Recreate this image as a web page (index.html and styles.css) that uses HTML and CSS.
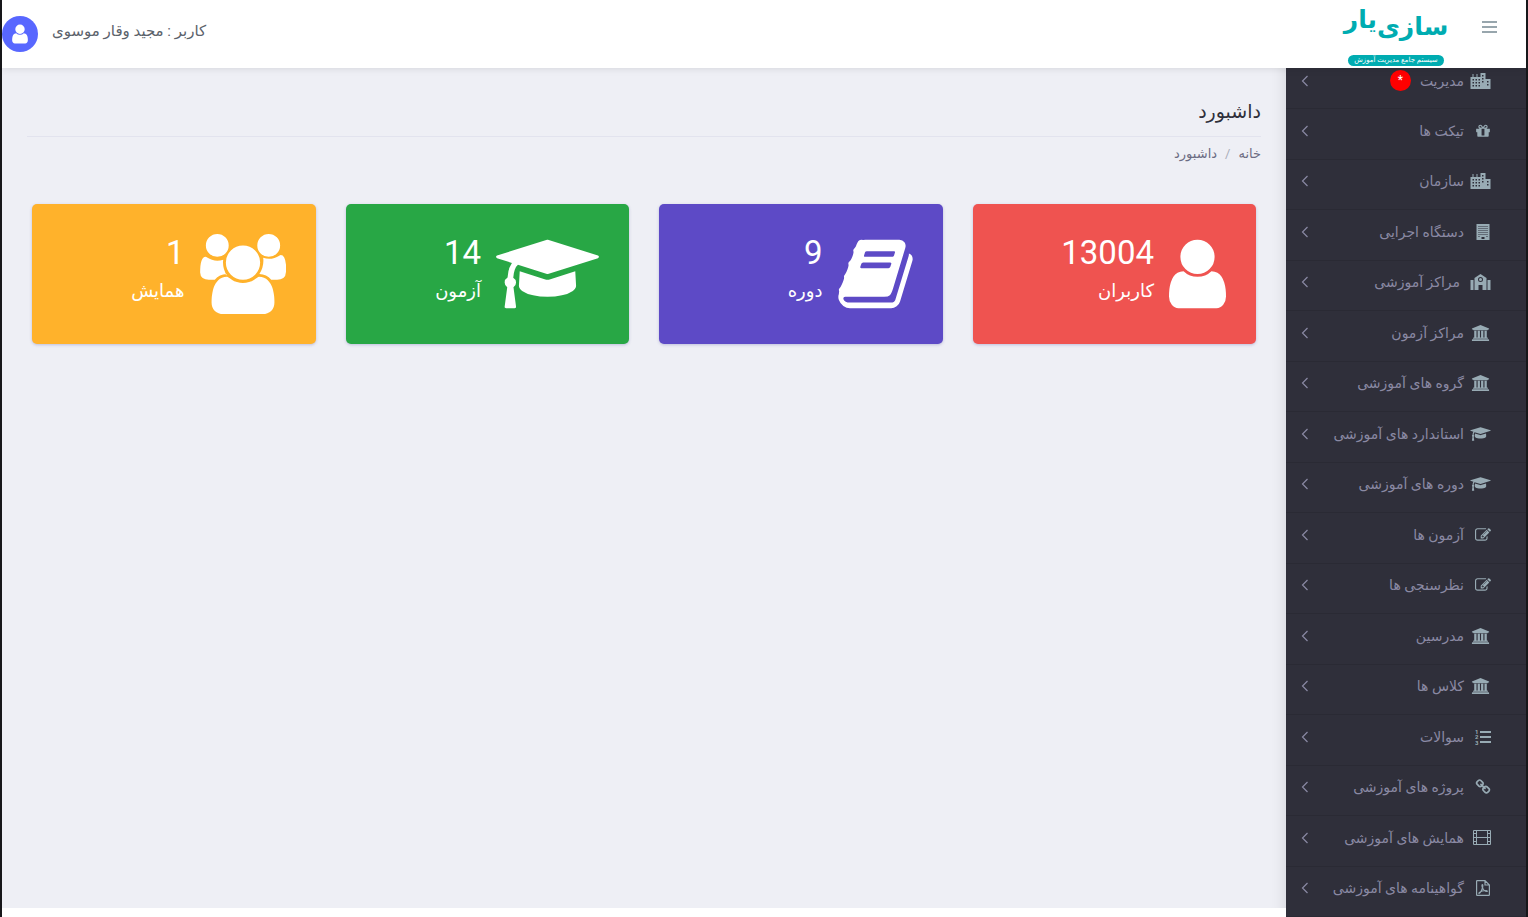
FILE: index.html
```
<!DOCTYPE html>
<html lang="fa" dir="rtl">
<head>
    <meta charset="UTF-8">
    <meta name="viewport" content="width=device-width, initial-scale=1.0">
    <title>داشبورد</title>
    <link rel="stylesheet" href="styles.css">
</head>
<body>
    <!-- Icons -->
    <svg class="sprite" aria-hidden="true">
        <symbol id="i-user" viewBox="256 0 1280 1792"><path d="M1536 1399q0 109-62.5 187t-150.5 78h-854q-88 0-150.5-78t-62.5-187q0-85 8.5-160.5t31.5-152 58.5-131 94-89 134.5-34.5q131 128 313 128t313-128q76 0 134.5 34.5t94 89 58.5 131 31.5 152 8.5 160.5zm-256-887q0 159-112.5 271.5t-271.5 112.5-271.5-112.5-112.5-271.5 112.5-271.5 271.5-112.5 271.5 112.5 112.5 271.5z"/></symbol>
        <symbol id="i-users" viewBox="0 0 1920 1792"><path d="M593 896q-162 5-265 128h-134q-82 0-138-40.5t-56-118.5q0-353 124-353 6 0 43.5 21t97.5 42.5 119 21.5q67 0 133-23-5 37-5 66 0 159 90 296zm1071 637q0 120-73 189.5t-194 69.5h-874q-121 0-194-69.5t-73-189.5q0-53 3.5-103.5t14-109 26.5-108.5 43-97.5 62-81 85.5-53.5 111.5-20q10 0 43 21.5t73 48 107 48 135 21.5 135-21.5 107-48 73-48 43-21.5q61 0 111.5 20t85.5 53.5 62 81 43 97.5 26.5 108.5 14 109 3.5 103.5zm-1024-1277q0 106-75 181t-181 75-181-75-75-181 75-181 181-75 181 75 75 181zm704 384q0 159-112.5 271.5t-271.5 112.5-271.5-112.5-112.5-271.5 112.5-271.5 271.5-112.5 271.5 112.5 112.5 271.5zm576 225q0 78-56 118.5t-138 40.5h-134q-103-123-265-128 90-137 90-296 0-29-5-66 66 23 133 23 59 0 119-21.5t97.5-42.5 43.5-21q124 0 124 353zm-128-609q0 106-75 181t-181 75-181-75-75-181 75-181 181-75 181 75 75 181z"/></symbol>
        <symbol id="i-cap" viewBox="0 0 2304 1792"><path d="M1774 836l18 316q4 69-82 128t-235 93.5-323 34.5-323-34.5-235-93.5-82-128l18-316 574 181q22 7 48 7t48-7zm530-324q0 23-22 31l-1120 352q-4 1-10 1t-10-1l-652-206q-43 34-71 111.5t-34 178.5q63 36 63 109 0 69-58 107l58 433q2 14-8 25-9 11-24 11h-192q-15 0-24-11-10-11-8-25l58-433q-58-38-58-107 0-73 65-111 11-207 98-330l-333-104q-22-8-22-31t22-31l1120-352q4-1 10-1t10 1l1120 352q22 8 22 31z"/></symbol>
        <symbol id="i-book" viewBox="0 0 1664 1792"><path d="M1639 478q40 57 18 129l-275 906q-19 64-76.5 107.5t-122.5 43.5h-923q-77 0-148.5-53.5t-99.5-131.5q-24-67-2-127 0-4 3-27t4-37q1-8-3-21.5t-3-19.5q2-11 8-21t16.5-23.5 16.5-23.5q23-38 45-91.5t30-91.5q3-10 .5-30t-.5-28q3-11 17-28t17-23q21-36 42-92t25-90q1-9-2.5-32t.5-28q4-13 22-30.5t22-22.5q19-26 42.5-84.5t27.5-96.5q1-8-3-25.5t-2-26.5q2-8 9-18t18-23 17-21q8-12 16.5-30.5t15-35 16-36 19.5-32 26.5-23.5 36-11.5 47.5 5.5l-1 3q38-9 51-9h761q74 0 114 56t18 130l-274 906q-36 119-71.5 153.5t-128.5 34.5h-869q-27 0-38 15-11 16-1 43 24 70 144 70h923q29 0 56-15.5t35-41.5l300-987q7-22 5-57 38 15 59 43zm-1064 2q-4 13 2 22.5t20 9.5h608q13 0 25.5-9.5t16.5-22.5l21-64q4-13-2-22.5t-20-9.5h-608q-13 0-25.5 9.5t-16.5 22.5zm-83 256q-4 13 2 22.5t20 9.5h608q13 0 25.5-9.5t16.5-22.5l21-64q4-13-2-22.5t-20-9.5h-608q-13 0-25.5 9.5t-16.5 22.5z"/></symbol>
        <symbol id="i-bank" viewBox="0 0 1920 1792"><path d="M960 0l960 384v128h-128q0 26-20.5 45t-48.5 19h-1526q-28 0-48.5-19t-20.5-45h-128v-128zm-704 640h256v768h128v-768h256v768h128v-768h256v768h128v-768h256v768h59q28 0 48.5 19t20.5 45v64h-1664v-64q0-26 20.5-45t48.5-19h59v-768zm1595 960q28 0 48.5 19t20.5 45v128h-1920v-128q0-26 20.5-45t48.5-19h1782z"/></symbol>
        <symbol id="i-gift" viewBox="128 0 1536 1792"><path d="M1056 1356v-716h-320v716q0 25 18 38.5t46 13.5h192q28 0 46-13.5t18-38.5zm-456-844h195l-126-161q-26-31-69-31-40 0-68 28t-28 68 28 68 68 28zm688-96q0-40-28-68t-68-28q-43 0-69 31l-125 161h194q40 0 68-28t28-68zm376 256v320q0 14-9 23t-23 9h-96v416q0 40-28 68t-68 28h-1088q-40 0-68-28t-28-68v-416h-96q-14 0-23-9t-9-23v-320q0-14 9-23t23-9h440q-93 0-158.5-65.5t-65.5-158.5 65.5-158.5 158.5-65.5q107 0 168 77l128 165 128-165q61-77 168-77 93 0 158.5 65.5t65.5 158.5-65.5 158.5-158.5 65.5h440q14 0 23 9t9 23z"/></symbol>
        <symbol id="i-edit" viewBox="0 128 1792 1536"><path d="M888 1184l116-116-152-152-116 116v56h96v96h56zm440-720q-16-16-33 1l-350 350q-17 17-1 33t33-1l350-350q17-17 1-33zm80 594v190q0 119-84.5 203.5t-203.5 84.5h-832q-119 0-203.5-84.5t-84.5-203.5v-832q0-119 84.5-203.5t203.5-84.5h832q63 0 117 25 15 7 18 23 3 17-9 29l-49 49q-14 14-32 8-23-6-45-6h-832q-66 0-113 47t-47 113v832q0 66 47 113t113 47h832q66 0 113-47t47-113v-126q0-13 9-22l64-64q15-15 35-7t20 29zm-96-738l288 288-672 672h-288v-288zm444 132l-92 92-288-288 92-92q28-28 68-28t68 28l152 152q28 28 28 68t-28 68z"/></symbol>
        <symbol id="i-link" viewBox="64 0 1664 1792"><path d="M1520 1216q0-40-28-68l-208-208q-28-28-68-28-42 0-72 32 3 3 19 18.5t21.5 21.5 15 19 13 25.5 3.5 27.5q0 40-28 68t-68 28q-15 0-27.5-3.5t-25.5-13-19-15-21.5-21.5-18.5-19q-33 31-33 73 0 40 28 68l206 207q27 27 68 27 40 0 68-26l147-146q28-28 28-67zm-703-705q0-40-28-68l-206-207q-28-28-68-28-39 0-68 27l-147 146q-28 28-28 67 0 40 28 68l208 208q27 27 68 27 42 0 72-31-3-3-19-18.5t-21.5-21.5-15-19-13-25.5-3.5-27.5q0-40 28-68t68-28q15 0 27.5 3.5t25.5 13 19 15 21.5 21.5 18.5 19q33-31 33-73zm895 705q0 120-85 203l-147 146q-83 83-203 83-121 0-204-85l-206-207q-83-83-83-203 0-123 88-209l-88-88q-86 88-208 88-120 0-204-84l-208-208q-84-84-84-204t85-203l147-146q83-83 203-83 121 0 204 85l206 207q83 83 83 203 0 123-88 209l88 88q86-88 208-88 120 0 204 84l208 208q84 84 84 204z"/></symbol>
        <symbol id="i-city" viewBox="0 0 20 16"><path fill-rule="evenodd" d="M0 16V4h2V1h1v3h3V1h1v3h3V0h5v5h0v1h5v10zM2 6v1.500h1.500V6zM5 6v1.500h1.500V6zM8 6v1.500h1.500V6zM2 9v1.500h1.500V9zM5 9v1.500h1.500V9zM8 9v1.500h1.500V9zM2 12v1.500h1.500V12zM5 12v1.500h1.500V12zM8 12v1.500h1.500V12zM11.500 2v1.500H13V2zM11.500 5v1.500H13V5zM11.500 8v1.500H13V8zM16.500 8v1.500H18V8zM16.500 11v1.500H18V11z"/></symbol>
        <symbol id="i-building" viewBox="0 0 13 16"><path fill-rule="evenodd" d="M0 0h13v16H0zM2 2v1h1V2zM4 2v1h1V2zM6 2v1h1V2zM8 2v1h1V2zM10 2v1h1V2zM2 4v1h1V4zM4 4v1h1V4zM6 4v1h1V4zM8 4v1h1V4zM10 4v1h1V4zM2 6v1h1V6zM4 6v1h1V6zM6 6v1h1V6zM8 6v1h1V6zM10 6v1h1V6zM2 8v1h1V8zM4 8v1h1V8zM6 8v1h1V8zM8 8v1h1V8zM10 8v1h1V8zM2 10v1h1v-1zM4 10v1h1v-1zM6 10v1h1v-1zM8 10v1h1v-1zM10 10v1h1v-1zM2 12v1h1v-1zM10 12v1h1v-1zM5 13v2h3v-2z"/></symbol>
        <symbol id="i-school" viewBox="0 0 20 16"><path fill-rule="evenodd" d="M0 6h3v10H0zM17 6h3v10h-3zM4 16V4l6-4 6 4v12h-4v-5H8v5zM10 3a2.500 2.500 0 1 0 0 5 2.500 2.500 0 0 0 0-5zm0 1a1.500 1.500 0 1 1 0 3 1.500 1.500 0 0 1 0-3z"/></symbol>
        <symbol id="i-list" viewBox="0 0 16 16"><path d="M5 2h11v2H5zM5 7h11v2H5zM5 12h11v2H5z"/><text x="0" y="5">1</text><text x="0" y="10">2</text><text x="0" y="16">3</text></symbol>
        <symbol id="i-film" viewBox="0 0 18 16"><path fill-rule="evenodd" d="M1 0h16a1 1 0 0 1 1 1v13a1 1 0 0 1-1 1H1a1 1 0 0 1-1-1V1a1 1 0 0 1 1-1zM1 1v2h2V1zM1 4v3h2V4zM1 8v3h2V8zM1 12v2h2v-2zM4 1v6h10V1zM4 8v6h10V8zM15 1v2h2V1zM15 4v3h2V4zM15 8v3h2V8zM15 12v2h2v-2z"/></symbol>
        <symbol id="i-pdf" viewBox="0 0 14 16"><path class="line" d="M9 .600H1.200a.6.6 0 0 0-.6.6v13.600c0 .3.300.6.6.6h11.600c.3 0 .6-.3.600-.6V5zM9 .600V5h4.400M3 13.500c1.500-.5 4.200-5 3.800-8.500-.6-1-1.200.3-.5 2.200.7 2 2.800 4.300 4.500 4.300.9-.1.500-1-.8-1-2 0-5.500 1-6.500 1.900-.6.600-.8 1-.5 1.100z"/></symbol>
        <symbol id="i-arrow" viewBox="0 0 8 12"><path class="line" d="M6.500 1L1.500 6l5 5"/></symbol>
    </svg>

    <!-- Header -->
    <header class="topbar">
        <div class="brand">
            <button class="menu-btn" type="button" aria-label="منو"><span></span><span></span><span></span></button>
            <a class="logo" href="#">
                <span class="logo-name"><span class="low">سازی</span><span>یار</span></span>
                <span class="logo-sub">سیستم جامع مدیریت آموزش</span>
            </a>
        </div>
        <div class="account">
            <span class="account-name">کاربر : مجید وقار موسوی</span>
            <a class="avatar" href="#" aria-label="حساب کاربری"><svg><use href="#i-user"/></svg></a>
        </div>
    </header>

    <div class="wrapper">
        <!-- Sidebar -->
        <nav class="sidebar">
            <ul>
                <li><a href="#"><svg class="icon wide"><use href="#i-city"/></svg>مدیریت <span class="badge">*</span><svg class="arrow"><use href="#i-arrow"/></svg></a></li>
                <li><a href="#"><svg class="icon"><use href="#i-gift"/></svg>تیکت ها<svg class="arrow"><use href="#i-arrow"/></svg></a></li>
                <li><a href="#"><svg class="icon wide"><use href="#i-city"/></svg>سازمان<svg class="arrow"><use href="#i-arrow"/></svg></a></li>
                <li><a href="#"><svg class="icon"><use href="#i-building"/></svg>دستگاه اجرایی<svg class="arrow"><use href="#i-arrow"/></svg></a></li>
                <li><a href="#"><svg class="icon wide spaced"><use href="#i-school"/></svg>مراکز آموزشی<svg class="arrow"><use href="#i-arrow"/></svg></a></li>
                <li><a href="#"><svg class="icon wide"><use href="#i-bank"/></svg>مراکز آزمون<svg class="arrow"><use href="#i-arrow"/></svg></a></li>
                <li><a href="#"><svg class="icon wide"><use href="#i-bank"/></svg>گروه های آموزشی<svg class="arrow"><use href="#i-arrow"/></svg></a></li>
                <li><a href="#"><svg class="icon wide"><use href="#i-cap"/></svg>استاندارد های آموزشی<svg class="arrow"><use href="#i-arrow"/></svg></a></li>
                <li><a href="#"><svg class="icon wide"><use href="#i-cap"/></svg>دوره های آموزشی<svg class="arrow"><use href="#i-arrow"/></svg></a></li>
                <li><a href="#"><svg class="icon"><use href="#i-edit"/></svg>آزمون ها<svg class="arrow"><use href="#i-arrow"/></svg></a></li>
                <li><a href="#"><svg class="icon"><use href="#i-edit"/></svg>نظرسنجی ها<svg class="arrow"><use href="#i-arrow"/></svg></a></li>
                <li><a href="#"><svg class="icon wide"><use href="#i-bank"/></svg>مدرسین<svg class="arrow"><use href="#i-arrow"/></svg></a></li>
                <li><a href="#"><svg class="icon wide"><use href="#i-bank"/></svg>کلاس ها<svg class="arrow"><use href="#i-arrow"/></svg></a></li>
                <li><a href="#"><svg class="icon"><use href="#i-list"/></svg>سوالات<svg class="arrow"><use href="#i-arrow"/></svg></a></li>
                <li><a href="#"><svg class="icon"><use href="#i-link"/></svg>پروژه های آموزشی<svg class="arrow"><use href="#i-arrow"/></svg></a></li>
                <li><a href="#"><svg class="icon film"><use href="#i-film"/></svg>همایش های آموزشی<svg class="arrow"><use href="#i-arrow"/></svg></a></li>
                <li><a href="#"><svg class="icon"><use href="#i-pdf"/></svg>گواهینامه های آموزشی<svg class="arrow"><use href="#i-arrow"/></svg></a></li>
            </ul>
        </nav>

        <!-- Content -->
        <main class="content">
            <h1>داشبورد</h1>
            <nav class="breadcrumb">
                <a href="#">خانه</a>
                <span class="sep">/</span>
                <span>داشبورد</span>
            </nav>

            <div class="cards">
                <a class="card red" href="#">
                    <svg class="user"><use href="#i-user"/></svg>
                    <span class="info"><strong>13004</strong><span>کاربران</span></span>
                </a>
                <a class="card purple" href="#">
                    <svg class="book"><use href="#i-book"/></svg>
                    <span class="info"><strong>9</strong><span>دوره</span></span>
                </a>
                <a class="card green" href="#">
                    <svg class="cap"><use href="#i-cap"/></svg>
                    <span class="info"><strong>14</strong><span>آزمون</span></span>
                </a>
                <a class="card orange" href="#">
                    <svg class="users"><use href="#i-users"/></svg>
                    <span class="info"><strong>1</strong><span>همایش</span></span>
                </a>
            </div>
        </main>
    </div>
</body>
</html>
```
FILE: styles.css
```
/* General */
* {
    box-sizing: border-box;
}

body {
    margin: 0;
    min-height: 100vh;
    display: flex;
    flex-direction: column;
    border: solid #17171a;
    border-width: 0 2px;
    background-color: #fff;
    font-family: Roboto, 'DejaVu Sans', sans-serif;
    font-size: 14px;
    color: #2f2f3a;
}

a {
    color: inherit;
    text-decoration: none;
}

svg {
    fill: currentColor;
    flex: none;
}

.sprite {
    display: none;
}

.sprite text {
    direction: ltr;
    font: bold 6px Roboto, sans-serif;
}

.line {
    fill: none;
    stroke: currentColor;
    stroke-width: 1.2;
}

/* Header */
.topbar {
    position: relative;
    z-index: 2;
    height: 68px;
    display: flex;
    justify-content: space-between;
    background-color: #fff;
    box-shadow: 0 0 8px rgba(0, 0, 0, 0.12);
}

.brand {
    display: flex;
    align-items: flex-start;
    padding-right: 29px;
    gap: 38px;
}

.menu-btn {
    display: flex;
    flex-direction: column;
    gap: 3px;
    margin-top: 21px;
    padding: 0;
    border: none;
    background: none;
    cursor: pointer;
}

.menu-btn span {
    width: 15px;
    height: 2px;
    background-color: #98a6ad;
}

.logo {
    width: 96px;
    height: 66px;
    display: flex;
    flex-direction: column;
    justify-content: space-between;
    color: #00acb1;
}

.logo-name {
    display: flex;
    justify-content: center;
    font-size: 25px;
    line-height: 40px;
    font-weight: bold;
    white-space: nowrap;
}

.logo-name .low {
    padding-top: 7px;
}

.logo-sub {
    height: 11px;
    border-radius: 6px;
    background-color: #00acb1;
    color: #fff;
    font-size: 7px;
    line-height: 10px;
    text-align: center;
    white-space: nowrap;
}

.account {
    display: flex;
    align-items: flex-start;
    gap: 14px;
    color: #5b626b;
}

.account-name {
    font-size: 15px;
    line-height: 24px;
    margin-top: 19px;
}

.avatar {
    width: 36px;
    height: 36px;
    margin-top: 16px;
    display: flex;
    align-items: center;
    justify-content: center;
    border-radius: 50%;
    background-color: #5867ff;
    color: #fff;
}

.avatar svg {
    width: 16px;
    height: 22px;
}

/* Layout */
.wrapper {
    flex: 1;
    display: flex;
}

/* Sidebar */
.sidebar {
    width: 240px;
    flex: none;
    display: flex;
    overflow: hidden;
    background-color: #2f2f3a;
    color: #8a89a3;
}

.sidebar ul {
    flex: 1;
    display: flex;
    flex-direction: column;
    list-style: none;
    margin: -9px 0 0;
    padding: 0;
}

.sidebar li {
    flex: 1;
    border-bottom: 1px solid #2a2a34;
}

.sidebar a {
    display: flex;
    align-items: center;
    padding: 0 35px 0 15px;
    height: 43px;
    font-size: 14px;
    white-space: nowrap;
}

.icon {
    width: 16px;
    height: 16px;
    margin-left: 11px;
    color: #98abb4;
}

.icon.wide {
    width: 21px;
    margin-left: 6px;
}

.icon.film {
    width: 18px;
    margin-left: 9px;
}

.icon.spaced {
    margin-left: 10px;
}

.arrow {
    width: 8px;
    height: 12px;
    margin-right: auto;
}

.badge {
    width: 21px;
    height: 21px;
    margin-right: 9px;
    border-radius: 50%;
    background-color: #f00;
    color: #fff;
    font-size: 12px;
    line-height: 21px;
    text-align: center;
}

/* Content */
.content {
    flex: 1;
    margin-bottom: 9px;
    padding: 28px 25px;
    background-color: #eeeff5;
    box-shadow: inset -16px 0 16px -16px rgba(0, 0, 0, 0.12);
}

h1 {
    margin: 0;
    padding-bottom: 8px;
    border-bottom: 1px solid #e2e3ee;
    font-size: 19px;
    line-height: 32px;
    font-weight: normal;
}

.breadcrumb {
    display: flex;
    gap: 8px;
    padding-top: 7px;
    font-size: 13px;
    line-height: 20px;
    color: #6b6b82;
}

.sep {
    color: #a9acb8;
}

/* Cards */
.cards {
    display: grid;
    grid-template-columns: repeat(4, 1fr);
    gap: 30px;
    padding: 40px 5px 0;
}

.card {
    height: 140px;
    display: flex;
    align-items: center;
    gap: 15px;
    padding: 0 30px;
    border-radius: 5px;
    color: #fff;
    box-shadow: 0 1px 3px rgba(80, 80, 160, 0.3);
}

.card svg {
    height: 80px;
}

.user {
    width: 57px;
}

.book {
    width: 75px;
}

.cap {
    width: 103px;
}

.users {
    width: 86px;
}

.info {
    display: flex;
    flex-direction: column;
    padding-bottom: 8px;
    font-size: 18px;
    line-height: 34px;
}

.info strong {
    font-size: 33px;
    line-height: 42px;
    font-weight: normal;
}

.red {
    background-color: #ef5350;
}

.purple {
    background-color: #5d4ac6;
}

.green {
    background-color: #28a745;
}

.orange {
    background-color: #ffb22b;
}
```
